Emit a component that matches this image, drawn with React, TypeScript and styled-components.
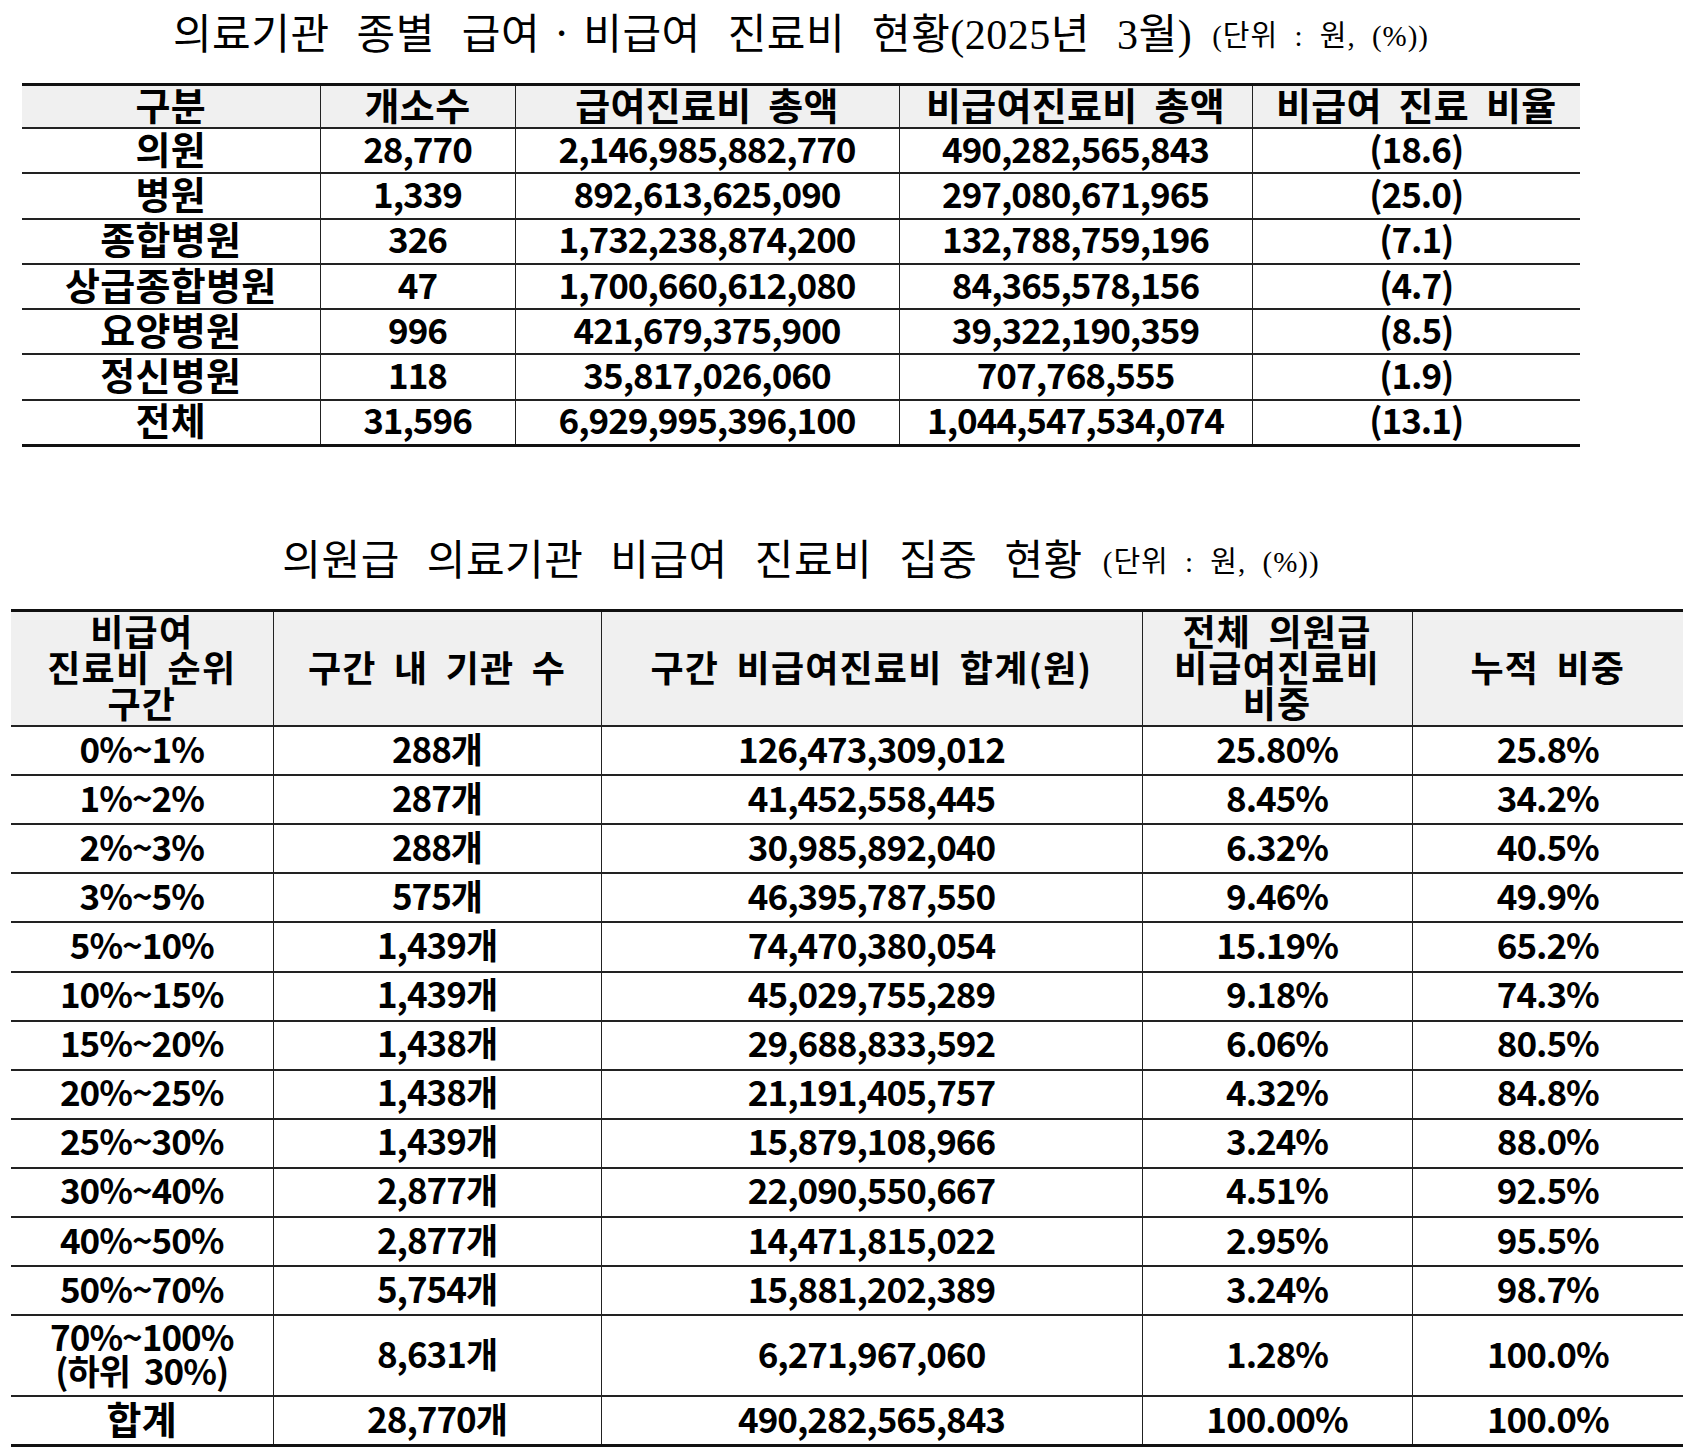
import React from "react";
import styled, { createGlobalStyle } from "styled-components";

const GlobalStyle = createGlobalStyle`
  html, body { margin: 0; padding: 0; background: #ffffff; }
  body { font-family: "Noto Sans CJK KR", "Noto Sans", sans-serif; color: #000; }
`;

const Page = styled.div`
  width: 1700px;
  display: flex;
  flex-direction: column;
`;

const Title = styled.div<{ $left: number; $width: number; $height: number; $padBottom: number }>`
  margin-left: ${(p) => p.$left}px;
  width: ${(p) => p.$width}px;
  height: ${(p) => p.$height}px;
  box-sizing: border-box;
  padding-bottom: ${(p) => p.$padBottom}px;
  display: flex;
  align-items: flex-end;
  justify-content: center;
  font-family: "Liberation Serif", "Noto Sans CJK KR", serif;
  font-weight: 400;
  font-size: 42px;
  line-height: 50px;
  letter-spacing: 0.5px;
  word-spacing: 16px;
  white-space: pre;
`;

const Dot = styled.span`
  margin: 0 2px;
`;

const Unit = styled.span`
  font-size: 29px;
  letter-spacing: 1px;
  word-spacing: 8px;
  margin-left: 20px;
  position: relative;
  top: 1px;
`;

const Table = styled.table<{ $left: number; $width: number }>`
  margin-left: ${(p) => p.$left}px;
  width: ${(p) => p.$width}px;
  border-collapse: collapse;
  table-layout: fixed;
  border-top: 3px solid #111;
  border-bottom: 3px solid #111;
`;

const HeadRow = styled.tr`
  background: #f0f0f0;
  border-bottom: 2px solid #222;
`;

const Row = styled.tr`
  border-bottom: 2px solid #222;
`;

const Cell = styled.td<{ $h: number; $ko?: boolean; $lh?: number; $fs?: number; $ls?: number }>`
  height: ${(p) => p.$h}px;
  padding: 0 0 6px 0;
  text-align: center;
  vertical-align: middle;
  font-family: "Noto Sans CJK KR", "Noto Sans", sans-serif;
  font-weight: 700;
  font-size: ${(p) => p.$fs ?? (p.$ko ? 38 : 35)}px;
  line-height: ${(p) => p.$lh ?? 34}px;
  letter-spacing: ${(p) => p.$ls ?? (p.$ko ? 0.3 : -1)}px;
  word-spacing: ${(p) => (p.$ko ? 8 : 0)}px;
  border-left: 1.5px solid #222;
  &:first-child { border-left: none; }
  white-space: pre;
`;

const HeadCell = styled(Cell).attrs({ as: "th" })`
  font-weight: 700;
  padding-bottom: 5px;
`;

const t1Cols = [298, 195, 384, 353, 328];
const t1Head = ["구분", "개소수", "급여진료비 총액", "비급여진료비 총액", "비급여 진료 비율"];
const t1Rows = [
  ["의원", "28,770", "2,146,985,882,770", "490,282,565,843", "(18.6)"],
  ["병원", "1,339", "892,613,625,090", "297,080,671,965", "(25.0)"],
  ["종합병원", "326", "1,732,238,874,200", "132,788,759,196", "(7.1)"],
  ["상급종합병원", "47", "1,700,660,612,080", "84,365,578,156", "(4.7)"],
  ["요양병원", "996", "421,679,375,900", "39,322,190,359", "(8.5)"],
  ["정신병원", "118", "35,817,026,060", "707,768,555", "(1.9)"],
  ["전체", "31,596", "6,929,995,396,100", "1,044,547,534,074", "(13.1)"],
];

const t2Cols = [262, 328, 541, 270, 271];
const t2Head = [
  "비급여\n진료비 순위\n구간",
  "구간 내 기관 수",
  "구간 비급여진료비 합계(원)",
  "전체 의원급\n비급여진료비\n비중",
  "누적 비중",
];
const t2Rows: string[][] = [
  ["0%~1%", "288개", "126,473,309,012", "25.80%", "25.8%"],
  ["1%~2%", "287개", "41,452,558,445", "8.45%", "34.2%"],
  ["2%~3%", "288개", "30,985,892,040", "6.32%", "40.5%"],
  ["3%~5%", "575개", "46,395,787,550", "9.46%", "49.9%"],
  ["5%~10%", "1,439개", "74,470,380,054", "15.19%", "65.2%"],
  ["10%~15%", "1,439개", "45,029,755,289", "9.18%", "74.3%"],
  ["15%~20%", "1,438개", "29,688,833,592", "6.06%", "80.5%"],
  ["20%~25%", "1,438개", "21,191,405,757", "4.32%", "84.8%"],
  ["25%~30%", "1,439개", "15,879,108,966", "3.24%", "88.0%"],
  ["30%~40%", "2,877개", "22,090,550,667", "4.51%", "92.5%"],
  ["40%~50%", "2,877개", "14,471,815,022", "2.95%", "95.5%"],
  ["50%~70%", "5,754개", "15,881,202,389", "3.24%", "98.7%"],
  ["70%~100%\n(하위  30%)", "8,631개", "6,271,967,060", "1.28%", "100.0%"],
  ["합계", "28,770개", "490,282,565,843", "100.00%", "100.0%"],
];

const isKo = (s: string) => /^[\uac00-\ud7a3\s]+$/.test(s);

export default function App() {
  return (
    <>
      <GlobalStyle />
      <Page>
        <Title $left={22} $width={1558} $height={83} $padBottom={23}>
          의료기관 종별 급여<Dot>ㆍ</Dot>비급여 진료비 현황(2025년 3월)
          <Unit>(단위 : 원, (%))</Unit>
        </Title>
        <Table $left={22} $width={1558}>
          <colgroup>
            {t1Cols.map((w, i) => (
              <col key={i} style={{ width: w }} />
            ))}
          </colgroup>
          <thead>
            <HeadRow>
              {t1Head.map((h, i) => (
                <HeadCell key={i} $h={36} $lh={34} $ko>
                  {h}
                </HeadCell>
              ))}
            </HeadRow>
          </thead>
          <tbody>
            {t1Rows.map((r, i) => (
              <Row key={i}>
                {r.map((c, j) => (
                  <Cell key={j} $h={37.3} $ko={isKo(c)}>
                    {c}
                  </Cell>
                ))}
              </Row>
            ))}
          </tbody>
        </Table>
        <Title $left={11} $width={1580} $height={162} $padBottom={23}>
          의원급 의료기관 비급여 진료비 집중 현황
          <Unit>(단위 : 원, (%))</Unit>
        </Title>
        <Table $left={11} $width={1672}>
          <colgroup>
            {t2Cols.map((w, i) => (
              <col key={i} style={{ width: w }} />
            ))}
          </colgroup>
          <thead>
            <HeadRow>
              {t2Head.map((h, i) => (
                <HeadCell key={i} $h={106} $lh={36} $fs={36} $ls={1.2} $ko>
                  {h}
                </HeadCell>
              ))}
            </HeadRow>
          </thead>
          <tbody>
            {t2Rows.map((r, i) => (
              <Row key={i}>
                {r.map((c, j) => (
                  <Cell key={j} $h={r[0].includes("\n") ? 73 : 41.1} $ko={isKo(c)}>
                    {c}
                  </Cell>
                ))}
              </Row>
            ))}
          </tbody>
        </Table>
      </Page>
    </>
  );
}
